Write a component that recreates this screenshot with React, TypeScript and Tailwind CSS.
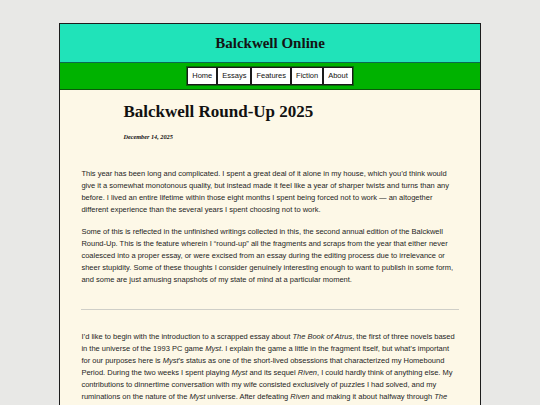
const navItems = ['Home', 'Essays', 'Features', 'Fiction', 'About'];

const serif = { fontFamily: '"Liberation Serif", "Times New Roman", serif' };

export default function App() {
  return (
    <div className="min-h-[405px] bg-[#e8e8e6] pt-[23px]">
      <div className="mx-auto w-[78%] border border-[#1c1c1c] bg-[#fdf8e7]">
        {/* header */}
        <header className="flex h-[39px] items-center justify-center border-b border-[#0b6a4e] bg-[#20e3b9]">
          <h1 className="text-[15px] font-bold text-[#141414]" style={serif}>
            Balckwell Online
          </h1>
        </header>

        {/* nav */}
        <nav className="flex h-[27px] items-center justify-center border-b border-[#0a5a0a] bg-[#00b200]">
          <ul className="flex border border-[#0a6a0a] font-['Liberation_Sans',Arial,sans-serif]">
            {navItems.map((item) => (
              <li
                key={item}
                className="flex h-[18px] items-center border border-[#1a1a1a] bg-white px-[4px] text-[7.5px] text-[#111]"
              >
                {item}
              </li>
            ))}
          </ul>
        </nav>

        <main className="px-[21px] pb-6 pt-[12px] font-['Liberation_Sans',Arial,sans-serif] text-[7.5px] leading-[12px] text-[#1e1e1e]">
          <div className="pl-[42px]">
            <h2 className="text-[17px] font-bold leading-[20px] text-[#111]" style={serif}>
              Balckwell Round-Up 2025
            </h2>
            <p className="mt-[11px] text-[6.25px] font-bold italic leading-[8px] text-[#111]" style={serif}>
              December 14, 2025
            </p>
          </div>

          <p className="mt-[27px]">
            This year has been long and complicated. I spent a great deal of it alone in my house, which you’d think would
            give it a somewhat monotonous quality, but instead made it feel like a year of sharper twists and turns than any
            before. I lived an entire lifetime within those eight months I spent being forced not to work — an altogether
            different experience than the several years I spent choosing not to work.
          </p>
          <p className="mt-[10px]">
            Some of this is reflected in the unfinished writings collected in this, the second annual edition of the Balckwell
            Round-Up. This is the feature wherein I “round-up” all the fragments and scraps from the year that either never
            coalesced into a proper essay, or were excised from an essay during the editing process due to irrelevance or
            sheer stupidity. Some of these thoughts I consider genuinely interesting enough to want to publish in some form,
            and some are just amusing snapshots of my state of mind at a particular moment.
          </p>

          <hr className="mb-[21px] mt-[23px] border-t border-[#cfcfc8]" />

          <p>
            I’d like to begin with the introduction to a scrapped essay about <i>The Book of Atrus</i>, the first of three novels
            based in the universe of the 1993 PC game <i>Myst</i>. I explain the game a little in the fragment itself, but what’s
            important for our purposes here is <i>Myst</i>’s status as one of the short-lived obsessions that characterized my
            Homebound Period. During the two weeks I spent playing <i>Myst</i> and its sequel <i>Riven</i>, I could hardly think of
            anything else. My contributions to dinnertime conversation with my wife consisted exclusively of puzzles I had
            solved, and my ruminations on the nature of the <i>Myst</i> universe. After defeating <i>Riven</i> and making it about
            halfway through <i>The Book of Atrus</i>, I finally came up for air, and the obsession faded as quickly as it had
            arrived.
          </p>
        </main>
      </div>
    </div>
  );
}
